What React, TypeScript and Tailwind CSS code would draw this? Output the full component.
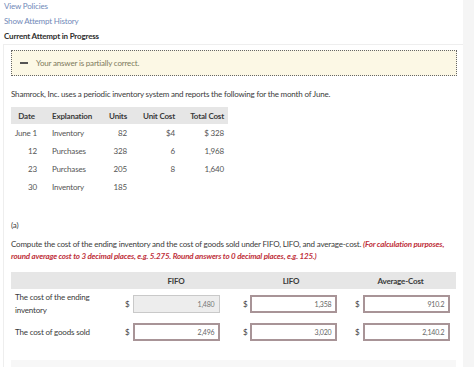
const rows = [
  { date: "June 1", exp: "Inventory", units: "82", unit: "$4", total: "$ 328" },
  { date: "12", exp: "Purchases", units: "328", unit: "6", total: "1,968" },
  { date: "23", exp: "Purchases", units: "205", unit: "8", total: "1,640" },
  { date: "30", exp: "Inventory", units: "185", unit: "", total: "" },
];

function Box({ value, ok }: { value: string; ok?: boolean }) {
  return (
    <div
      className={
        ok
          ? "w-[87px] h-[18px] border border-[#c9c9c9] bg-[#ededed] flex items-center justify-end pr-[5px] text-[7px] text-[#777]"
          : "w-[87px] h-[18px] border-2 border-[#a89497] bg-white flex items-center justify-end pr-[4px] text-[7px] text-[#666]"
      }
    >
      {value}
    </div>
  );
}

function AnsRow({ label, vals }: { label: React.ReactNode; vals: [string, string, string] }) {
  return (
    <div className="grid grid-cols-[110px_116px_114px_105px] items-center">
      <div className="pl-[4px] leading-[13px]">{label}</div>
      <div className="flex items-center pl-[4px] gap-[4px]">
        <span>$</span>
        <Box value={vals[0]} ok={vals[0] === "1,480"} />
      </div>
      <div className="flex items-center pl-[6px] gap-[3px]">
        <span>$</span>
        <Box value={vals[1]} />
      </div>
      <div className="flex items-center pl-[4px] gap-[4px]">
        <span>$</span>
        <Box value={vals[2]} />
      </div>
    </div>
  );
}

export default function App() {
  return (
    <div className="flex w-[474px] h-[367px] overflow-hidden bg-[#f5f5f5] font-['Lato',sans-serif] text-[8px] tracking-[-0.18px] text-[#3a3a3a]">
      <div className="w-[463px] bg-white flex flex-col">
        <div className="px-[4px] flex flex-col">
          <div className="leading-[13px] text-[#7189b8]">View Policies</div>
          <div className="leading-[14px] text-[#7189b8] pt-[1px]">Show Attempt History</div>
          <div className="leading-[15px] font-bold text-[#2e2e2e] pt-[1px]">Current Attempt in Progress</div>
        </div>
        <div className="border-t border-l border-[#eeeeee] ml-[3px] flex-1 pl-[7px] pr-[6px]">
          <div className="mt-[5px] h-[26px] border border-dotted border-[#666] bg-[#fcf8e5] flex items-center">
            <div className="ml-[8px] w-[8px] h-[2.5px] bg-[#555]" />
            <div className="ml-[8px] text-[#7d7a5c]">Your answer is partially correct.</div>
          </div>
          <div className="mt-[12px] leading-[12px]">
            Shamrock, Inc. uses a periodic inventory system and reports the following for the month of June.
          </div>
          <div className="mt-[7px] w-[217px] text-[#555]">
            <div className="grid grid-cols-[30px_60px_26px_48px_53px] h-[17px] items-center bg-[#e6e6e6] font-bold text-[#3a3a3a]">
              <div className="text-center pl-[1px]">Date</div>
              <div className="pl-[11px]">Explanation</div>
              <div className="text-right">Units</div>
              <div className="text-right">Unit Cost</div>
              <div className="text-right pr-[4px]">Total Cost</div>
            </div>
            {rows.map((r) => (
              <div key={r.date} className="grid grid-cols-[30px_60px_26px_48px_53px] h-[18px] items-center">
                <div className="text-right pr-[4px]">{r.date}</div>
                <div className="pl-[11px]">{r.exp}</div>
                <div className="text-right">{r.units}</div>
                <div className="text-right">{r.unit}</div>
                <div className="text-right pr-[4px]">{r.total}</div>
              </div>
            ))}
          </div>
          <div className="mt-[23px] leading-[12px]">(a)</div>
          <div className="mt-[7px] leading-[12px] pr-[12px]">
            Compute the cost of the ending inventory and the cost of goods sold under FIFO, LIFO, and average-cost.{" "}
            <span className="text-[#c0313b] italic font-bold">
              (For calculation purposes, round average cost to 3 decimal places, e.g. 5.275. Round answers to 0 decimal places, e.g. 125.)
            </span>
          </div>
          <div className="mt-[10px] w-[445px]">
            <div className="grid grid-cols-[110px_116px_114px_105px] h-[17px] items-center bg-[#e6e6e6] font-bold">
              <div />
              <div className="text-center pr-[6px]">FIFO</div>
              <div className="text-center pr-[6px]">LIFO</div>
              <div className="text-center pr-[6px]">Average-Cost</div>
            </div>
            <div className="mt-[2px]">
              <AnsRow
                label={<>The cost of the ending<br />inventory</>}
                vals={["1,480", "1,358", "910.2"]}
              />
            </div>
            <div className="mt-[6px]">
              <AnsRow label="The cost of goods sold" vals={["2,496", "3,020", "2,140.2"]} />
            </div>
            <div className="mt-[19px] h-[20px] bg-[#f7f7f7]" />
          </div>
        </div>
      </div>
    </div>
  );
}
